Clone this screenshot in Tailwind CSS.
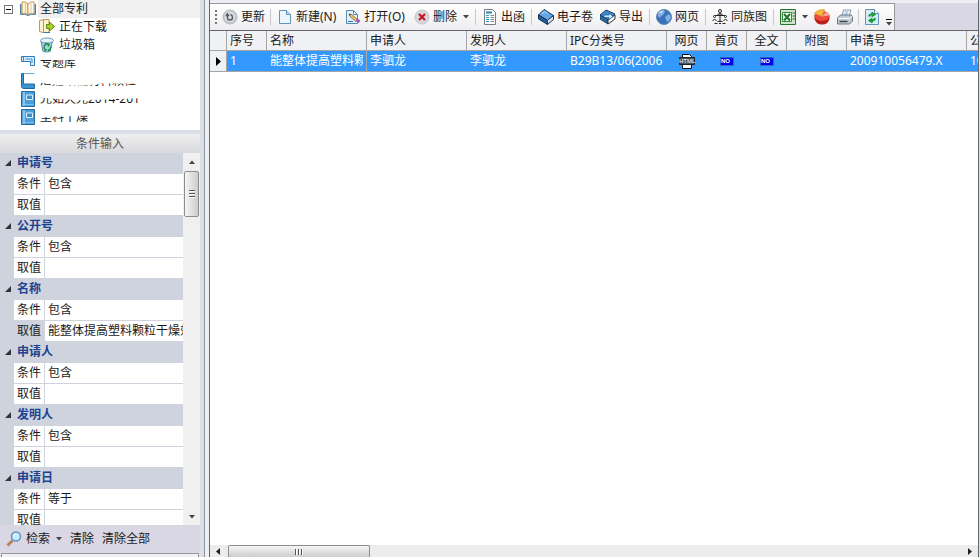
<!DOCTYPE html>
<html lang="zh-CN">
<head>
    <meta charset="UTF-8">
    <title>专利管理</title>
    <script src="https://cdn.jsdelivr.net/npm/@tailwindcss/browser@4"></script>
</head>
<body class="flex h-screen overflow-hidden bg-[#dcdfe8] font-['Noto_Sans','Noto_Sans_CJK_SC',sans-serif] text-xs leading-4 text-[#1a1a1a]">
    <!-- Shared icons -->
    <svg class="hidden">
        <symbol id="i-book" viewBox="0 0 16 16">
            <path d="M1.500.5h13v15h-13z" fill="#4a9fdc" stroke="#25699f"/>
            <path d="M4 1v14" stroke="#c9e8fa"/>
            <path d="M6.500 4h6v4.500h-6z" fill="#3a8ecb" stroke="#dff2fd"/>
            <path d="M2 13.500h12" stroke="#7cc2ee"/>
        </symbol>
        <symbol id="i-cube" viewBox="0 0 16 16">
            <path d="M.5 6 6 .5l9.500 6-6 5z" fill="#62a6e6" stroke="#173451"/>
            <path d="M.5 6v4l9 5.500v-4z" fill="#1f5f9f" stroke="#173451"/>
            <path d="M9.500 11.500v4l6-5v-4z" fill="#f4f8fb" stroke="#173451"/>
            <path d="m10.500 13.500 4.500-4" stroke="#9ab" stroke-width=".7"/>
            <path d="m3.500 5 3-2.500 3 2" stroke="#c6e4fc" fill="none"/>
        </symbol>
        <symbol id="i-down" viewBox="0 0 6 4"><path d="M0 0h6L3 3.500z" fill="#444"/></symbol>
    </svg>

    <aside class="flex w-[200px] shrink-0 flex-col">
        <ul class="h-[130px] shrink-0 overflow-hidden bg-white">
            <li class="flex h-[18px] items-center">
                <button class="ml-1 h-[9px] w-[9px] border border-[#777] bg-white" aria-label="折叠"><span class="mx-auto block h-px w-[5px] bg-black"></span></button>
                <svg class="ml-[7px] h-4 w-4" viewBox="0 0 16 16"><path d="M.5 3v10.500q4-1 7.500 1 3.500-2 7.500-1V3" fill="#91c2e6" stroke="#4f7fa8"/><path d="M2 1q4-1 6 2v10.500q-2-2-6-1z" fill="#fff3cf" stroke="#c49355"/><path d="M14 1q-4-1-6 2v10.500q2-2 6-1z" fill="#fff" stroke="#c49355"/><path d="M5.500 2v9.500M11 2v9.500" stroke="#e4c48a"/></svg>
                <span class="ml-[2px] flex-1 self-stretch bg-[#f0f0f0] pl-[2px] leading-[18px]">全部专利</span>
            </li>
            <li class="flex h-[18px] items-center pl-[39px]">
                <svg class="h-4 w-4" viewBox="0 0 16 16"><path d="M.5 1.500 5 .5h5v13H4l-3.500-1z" fill="#fff4d2" stroke="#c2945a"/><path d="M4.500 1v12" stroke="#c2945a"/><path d="M5 13.500h6" stroke="#3578a6"/><path d="M7.500 5.500h3V3L15.500 7.500l-5 4.500V9.500h-3z" fill="#a7cf27" stroke="#5e8a10"/></svg>
                <span class="ml-1">正在下载</span>
            </li>
            <li class="flex h-[18px] items-center pl-[39px]">
                <svg class="h-4 w-4" viewBox="0 0 16 16"><path d="m2 4 2 10.500q4 1 7 0L13.500 4z" fill="#a9d0ea" stroke="#5b88ac"/><ellipse cx="8" cy="3.500" rx="6.500" ry="2.500" fill="#e6f2fa" stroke="#6d9cbd"/><path d="M5 9.500 7 6.500l3 1-1 2M5 10l1 3h2M9 13h2l1-3.500" stroke="#159138" stroke-width="1.500" fill="none"/></svg>
                <span class="ml-1">垃圾箱</span>
            </li>
            <li class="flex h-[18px] items-center pl-5">
                <svg class="h-4 w-4" viewBox="0 0 16 16"><path d="M1.500 1.500h13v9h-4v-4h-9z" fill="#d9eefb" stroke="#2d7cb8"/><path d="M3.500 2v4M5.500 4h6.500v4" fill="none" stroke="#3b93d0"/></svg>
                <span class="ml-1 [clip-path:inset(5px_0_0_0)]">专题库</span>
            </li>
            <li class="flex h-[18px] items-center pl-5">
                <svg class="h-4 w-4" viewBox="0 0 16 16"><path d="M1.500.5v13q0 2 2 2h11v-4.500h-11V.5z" fill="#3b93d0" stroke="#25699f"/><path d="M3.500.5h11" stroke="#69a9d7"/></svg>
                <span class="ml-1 [clip-path:polygon(0_60%,20%_76%,45%_80%,65%_66%,100%_66%,100%_86%,0_86%)]">尼龙改性材料颗粒</span>
            </li>
            <li class="flex h-[18px] items-center pl-5">
                <svg class="h-4 w-4"><use href="#i-book"/></svg>
                <span class="ml-1 [clip-path:polygon(0_42%,40%_58%,100%_46%,100%_100%,60%_80%,0_80%)]">光如天光2014-201</span>
            </li>
            <li class="flex h-[18px] items-center pl-5">
                <svg class="h-4 w-4"><use href="#i-book"/></svg>
                <span class="ml-1 [clip-path:polygon(0_52%,100%_40%,100%_88%,0_88%)]">塑料干燥</span>
            </li>
        </ul>

        <h2 class="mt-1 h-[19px] shrink-0 bg-linear-to-b from-[#eeeeef] to-[#d9dadc] text-center leading-[19px] text-[#555]">条件输入</h2>

        <div class="flex min-h-0 flex-1">
            <form id="conditions" class="min-w-0 flex-1 overflow-hidden bg-[#ced3dd]"></form>
            <div class="flex w-[17px] flex-col items-center bg-[#f0f0f0]">
                <svg class="my-[7px] h-1 w-[6px] shrink-0 rotate-180"><use href="#i-down"/></svg>
                <div class="flex h-[46px] w-[15px] shrink-0 flex-col items-center justify-center gap-px rounded-xs border border-[#8d8d8d] bg-linear-to-r from-[#f5f5f5] to-[#cdcdcf]">
                    <i class="h-[2px] w-[6px] border-b border-white bg-[#555]"></i>
                    <i class="h-[2px] w-[6px] border-b border-white bg-[#555]"></i>
                    <i class="h-[2px] w-[6px] border-b border-white bg-[#555]"></i>
                </div>
                <svg class="mt-auto mb-[6px] h-1 w-[6px] shrink-0"><use href="#i-down"/></svg>
            </div>
        </div>

        <div class="flex h-7 shrink-0 items-center bg-[#dad7e5] pl-[6px]">
            <button class="flex items-center gap-1">
                <svg class="h-4 w-4" viewBox="0 0 16 16"><path d="m1.500 14.500 5-5" stroke="#b98261" stroke-width="3"/><circle cx="10" cy="5.500" r="4.500" fill="#c7edff" stroke="#5f93bd" stroke-width="1.500"/><path d="M7.500 5q.5-2 2.500-2.500" stroke="#fff" fill="none"/></svg>
                检索
                <svg class="ml-[2px] h-1 w-[6px]"><use href="#i-down"/></svg>
            </button>
            <button class="ml-2">清除</button>
            <button class="ml-2">清除全部</button>
        </div>
        <div class="mx-px h-1 shrink-0 border border-b-0 border-[#999] bg-[#f0f0f3]"></div>
    </aside>

    <div class="w-[9px] shrink-0 border-x-4 border-l-[#dcdfe8] border-r-[#eceff4] bg-[#8d929b]"></div>

    <main class="mr-px flex min-w-0 flex-1 flex-col border-x border-[#666]">
        <div class="flex h-[30px] shrink-0 bg-[#dad7e5] shadow-[inset_0_3px_#eceef3]">
            <div class="mt-[3px] flex items-center gap-px border-t border-r border-[#999] bg-linear-to-b from-white to-[#eeeef0] pl-[5px]">
                <span class="mr-[2px] h-[14px] border-l-2 border-dotted border-[#777]"></span>
                <button class="flex items-center gap-[3px] px-[2px]">
                    <svg class="h-4 w-4" viewBox="0 0 16 16"><circle cx="8" cy="8" r="7" fill="#c8cbd0" stroke="#b3b7bd"/><circle cx="8" cy="8" r="5" fill="#dcdee2"/><path d="M5.500 6v3q0 2 2.500 2t2.500-2.500Q10.500 6 8.500 5.500M4 7l1.500-2L7 7" fill="none" stroke="#555b63" stroke-width="1.400"/></svg>
                    更新
                </button>
                <span class="mx-[2px] h-4 w-px bg-[#c5c7cc]"></span>
                <button class="flex items-center gap-[3px] pr-1 pl-[3px]">
                    <svg class="h-4 w-4" viewBox="0 0 16 16"><path d="M2.500 1.500h7l4 4v9h-11z" fill="#eaf5fd" stroke="#6393b8"/><path d="M9.500 1.500v4h4" fill="#bddbf0" stroke="#6393b8"/></svg>
                    新建(N)
                </button>
                <button class="flex items-center gap-[3px] pr-1 pl-1">
                    <svg class="h-4 w-4" viewBox="0 0 16 16"><path d="M1.500 1.500h7l4 4v9h-11z" fill="#e3f2fc" stroke="#5489b3"/><path d="M8.500 1.500v4h4" fill="none" stroke="#5489b3"/><path d="m4 5 2.500.500 6 5-1.500 2-6-5z" fill="#f2c45b" stroke="#60543b" stroke-width=".7"/><path d="m4 5 2 .5-1 1z" fill="#222"/><path d="m11.500 10.500 3 2.500" stroke="#a45bb9" stroke-width="3"/><path d="M3 12.500h5" stroke="#2779bb"/></svg>
                    打开(O)
                </button>
                <button class="flex items-center gap-[3px] pr-[3px] pl-1">
                    <svg class="h-4 w-4" viewBox="0 0 16 16"><circle cx="8" cy="8" r="7" fill="#d5d8dd" stroke="#c2c5cb"/><path d="m5 5 6 6m0-6-6 6" stroke="#c6161d" stroke-width="2.200"/></svg>
                    删除
                </button>
                <button class="flex w-[11px] justify-center" aria-label="删除选项"><svg class="h-1 w-[6px]"><use href="#i-down"/></svg></button>
                <span class="mx-[2px] h-4 w-px bg-[#c5c7cc]"></span>
                <button class="flex items-center gap-[3px] px-[3px]">
                    <svg class="h-4 w-4" viewBox="0 0 16 16"><path d="M2.500.5h8l3 3v12h-11z" fill="#fafafa" stroke="#777d80"/><path d="M4 3.500h6" stroke="#2b86a9" stroke-width="2"/><path d="M4 6.500h3M4 8.500h3M4 10.500h3M4 12.500h3" stroke="#389ac0"/><path d="M8.500 6.500H12M8.500 8.500H12M8.500 10.500H12M8.500 12.500H12" stroke="#888"/></svg>
                    出函
                </button>
                <span class="mx-[2px] h-4 w-px bg-[#c5c7cc]"></span>
                <button class="flex items-center gap-[3px] px-[3px]">
                    <svg class="h-4 w-4"><use href="#i-cube"/></svg>
                    电子卷
                </button>
                <button class="flex items-center gap-[3px] px-[3px]">
                    <svg class="h-4 w-4" viewBox="0 0 16 16"><path d="m0 6 6-5 9 4-7 6z" fill="#4388c5" stroke="#1d4268"/><path d="M0 6v4l8 5v-4z" fill="#2d679c" stroke="#1d4268"/><path d="m8 11 7-5v4l-7 5z" fill="#fff" stroke="#333"/><path d="M4 6h5V4l4 3.500L9 11V8.500H4z" fill="#c9e8fc" stroke="#17609b" stroke-width=".7"/></svg>
                    导出
                </button>
                <span class="mx-[2px] h-4 w-px bg-[#c5c7cc]"></span>
                <button class="flex items-center gap-[3px] px-[3px]">
                    <svg class="h-4 w-4" viewBox="0 0 16 16"><circle cx="8" cy="8" r="7.500" fill="#3972b8" stroke="#5c86b8"/><path d="M2 4q3-3.500 6-3l1 2-2 3-2 1-1 2-2-2zM10 7l3-2 2 3-2 4-2 1-1-3-1-1z" fill="#82b2e4"/><path d="M3 4q2-2.500 4-2.500L6 4z" fill="#d6e9fa"/></svg>
                    网页
                </button>
                <span class="mx-[2px] h-4 w-px bg-[#c5c7cc]"></span>
                <button class="flex items-center gap-[3px] px-[3px]">
                    <svg class="h-4 w-4" viewBox="0 0 16 16" fill="none" stroke="#222"><circle cx="8" cy="2" r="1.500" fill="#fff"/><path d="M5.500 5.500q2.500-2 5 0M8 5v8M3 6.500h10"/><circle cx="2.500" cy="7.500" r="1" fill="#fff"/><circle cx="13.500" cy="7.500" r="1" fill="#fff"/><path d="M.5 11.500q2-2 4 0M11.500 11.500q2-2 4 0M5.500 12.500h5"/><path d="M2.500 14.500h3M7 14.500h2M10.500 14.500h3"/></svg>
                    同族图
                </button>
                <span class="mx-[2px] h-4 w-px bg-[#c5c7cc]"></span>
                <button class="px-[3px]" aria-label="Excel">
                    <svg class="h-4 w-4" viewBox="0 0 16 16"><path d="M.5.5h15v15H.5z" fill="#cfe3cc" stroke="#2c7132"/><path d="M2.500 3.500h9v9h-9z" fill="#fff" stroke="#3b8540"/><path d="m4 5 6 6.500m0-6.500-6 6.500" stroke="#217b2b" stroke-width="2.200"/><path d="M12.500 4H15M12.500 7H15M12.500 10H15" stroke="#2c7132"/></svg>
                </button>
                <button class="flex w-[10px] justify-center" aria-label="Excel选项"><svg class="h-1 w-[6px]"><use href="#i-down"/></svg></button>
                <button class="px-[3px]" aria-label="统计">
                    <svg class="h-4 w-4" viewBox="0 0 16 16"><path d="M.5 6v4q1.500 5.500 7.500 5.500t7.500-5.500V6z" fill="#b81f1c"/><ellipse cx="8" cy="7" rx="7.500" ry="5" fill="#ed4b3a"/><path d="M8 7.500.5 4.500Q2.500.5 10.500.5z" fill="#f8b83e" stroke="#d18a21" stroke-width=".6"/><path d="m8 7.500 4-4.500q3 1 3.500 3.500z" fill="#f2a79a"/></svg>
                </button>
                <button class="px-[3px]" aria-label="打印">
                    <svg class="h-4 w-4" viewBox="0 0 16 16"><path d="m5 7 1.500-6H14l-2 6z" fill="#fff" stroke="#8c96a2"/><path d="M7.500 3h4M7 5h4" stroke="#73a9cf"/><path d="m.5 9 3-3h11l1 2v4l-3 3H.5z" fill="#c2c9d1" stroke="#6f7984"/><path d="M1 9.500h11.500l3-2.500" stroke="#fff" fill="none"/><path d="M2.500 12.500h8" stroke="#3b444e" stroke-width="1.500"/></svg>
                </button>
                <span class="mx-px h-4 w-px bg-[#c5c7cc]"></span>
                <button class="px-[3px]" aria-label="刷新">
                    <svg class="h-4 w-4" viewBox="0 0 16 16"><path d="M1.500.5h9l4 4v11h-13z" fill="#d8ebf8" stroke="#6290bd"/><path d="M10.500.5v4h4" fill="#fff" stroke="#6290bd"/><path d="M5 7.500Q5.500 5 8.500 5.500M7.500 3.500l3 2-3 2M11 9q-.5 3-3.500 2.500M8.500 9.500l-3 2 3 2" fill="none" stroke="#11952d" stroke-width="1.800"/></svg>
                </button>
                <button class="flex h-full w-[10px] flex-col items-center justify-end gap-[2px] pb-1" aria-label="更多">
                    <span class="h-px w-[6px] bg-black"></span>
                    <svg class="h-1 w-[6px]"><use href="#i-down"/></svg>
                </button>
            </div>
        </div>

        <div class="min-h-0 flex-1 overflow-hidden border-t border-[#666] bg-white">
            <table class="w-[877px] table-fixed border-separate border-spacing-0 whitespace-nowrap">
                <colgroup>
                    <col class="w-[17px]"><col class="w-[40px]"><col class="w-[100px]"><col class="w-[100px]"><col class="w-[100px]"><col class="w-[100px]"><col class="w-[40px]"><col class="w-[40px]"><col class="w-[40px]"><col class="w-[60px]"><col class="w-[120px]"><col class="w-[120px]">
                </colgroup>
                <thead>
                    <tr class="h-5 bg-[#f0f1f5] text-left *:overflow-hidden *:border-r *:border-b *:border-[#a5a5a5] *:p-0 *:font-normal">
                        <th></th>
                        <th><div class="pl-[3px]">序号</div></th>
                        <th><div class="pl-[3px]">名称</div></th>
                        <th><div class="pl-[3px]">申请人</div></th>
                        <th><div class="pl-[3px]">发明人</div></th>
                        <th><div class="pl-[3px]">IPC分类号</div></th>
                        <th class="text-center">网页</th>
                        <th class="text-center">首页</th>
                        <th class="text-center">全文</th>
                        <th class="text-center">附图</th>
                        <th><div class="pl-[3px]">申请号</div></th>
                        <th><div class="pl-[3px]">公开号</div></th>
                    </tr>
                </thead>
                <tbody>
                    <tr class="h-[21px] bg-[#3399ff] text-white *:overflow-hidden *:border-b *:border-[#a5a5a5] *:p-0">
                        <td class="border-r bg-[#f0f1f5]"><svg class="ml-[6px] h-[9px] w-[5px]" viewBox="0 0 5 9"><path d="M0 0v9l5-4.500z"/></svg></td>
                        <td><div class="pl-[3px]">1</div></td>
                        <td class="border-r"><div class="mx-[3px] overflow-hidden">能整体提高塑料颗粒干燥效率</div></td>
                        <td><div class="pl-[3px]">李驷龙</div></td>
                        <td><div class="pl-[3px]">李驷龙</div></td>
                        <td><div class="mr-1 ml-[3px] overflow-hidden">B29B13/06(2006.01)</div></td>
                        <td>
                            <div class="relative mx-auto h-[15px] w-4">
                                <svg class="h-[15px] w-4" viewBox="0 0 16 15"><path d="M3.500 4V.5h7l2 2V4M3.500 11v3.500h9V11" fill="#fff" stroke="#111"/><path d="M.5 3.500h15v7H.5z" fill="#4a5560" stroke="#222"/></svg>
                                <span class="absolute inset-x-0 top-[4px] text-center font-['Liberation_Sans'] text-[6px] leading-[7px] text-white">HTML</span>
                            </div>
                        </td>
                        <td><span class="mx-auto block h-[9px] w-[14px] border border-[#2b66c9] bg-[#0000f0] pr-[3px] text-center font-['Liberation_Sans'] text-[6px] leading-[7px] font-bold">NO</span></td>
                        <td><span class="mx-auto block h-[9px] w-[14px] border border-[#2b66c9] bg-[#0000f0] pr-[3px] text-center font-['Liberation_Sans'] text-[6px] leading-[7px] font-bold">NO</span></td>
                        <td></td>
                        <td><div class="pl-[3px]">200910056479.X</div></td>
                        <td><div class="pl-[3px]">101602231</div></td>
                    </tr>
                </tbody>
            </table>
        </div>

        <div class="flex h-3 shrink-0 items-center bg-[#ececec]">
            <svg class="ml-[6px] h-[7px] w-1" viewBox="0 0 4 7"><path d="M4 0v7L0 3.500z" fill="#222"/></svg>
            <div class="ml-2 flex h-3 w-[142px] items-center justify-center gap-px rounded-t-xs border border-b-0 border-[#8d8d8d] bg-linear-to-b from-[#f5f5f5] to-[#cdcdcf]">
                <i class="h-[6px] w-[2px] border-r border-white bg-[#555]"></i>
                <i class="h-[6px] w-[2px] border-r border-white bg-[#555]"></i>
                <i class="h-[6px] w-[2px] border-r border-white bg-[#555]"></i>
            </div>
            <svg class="mr-[6px] ml-auto h-[7px] w-1" viewBox="0 0 4 7"><path d="M0 0v7l4-3.500z" fill="#222"/></svg>
        </div>
    </main>

    <script>
        const groups = [
            { name: '申请号', condition: '包含' },
            { name: '公开号', condition: '包含' },
            { name: '名称', condition: '包含', value: '能整体提高塑料颗粒干燥效率' },
            { name: '申请人', condition: '包含' },
            { name: '发明人', condition: '包含' },
            { name: '申请日', condition: '等于' }
        ];

        document.getElementById('conditions').innerHTML = groups.map((g, i) => `
            <fieldset>
                <div class="flex h-[21px] items-center pb-[2px] pl-[5px] font-bold text-[#1d4290]">
                    <svg class="mr-[6px] h-[6px] w-[6px]" viewBox="0 0 6 6"><path d="M6 0v6H0z" fill="#333"/></svg>
                    ${g.name}
                </div>
                <div class="ml-[14px] flex h-[21px] border-b border-[#ced3dd] bg-white">
                    <label for="cond-${i}" class="w-[31px] shrink-0 border-r border-[#ced3dd] pl-[3px] leading-5">条件</label>
                    <select id="cond-${i}" class="min-w-0 flex-1 appearance-none pl-[3px] leading-5">
                        <option>${g.condition}</option>
                    </select>
                </div>
                <div class="ml-[14px] flex h-[21px] border-b border-[#ced3dd] bg-white">
                    <label for="val-${i}" class="w-[31px] shrink-0 border-r border-[#ced3dd] pl-[3px] leading-5 ${g.value ? 'bg-[#ced3dd]' : ''}">取值</label>
                    <input id="val-${i}" type="text" value="${g.value || ''}" class="min-w-0 flex-1 pl-[3px] leading-5">
                </div>
            </fieldset>
        `).join('');
    </script>
</body>
</html>
